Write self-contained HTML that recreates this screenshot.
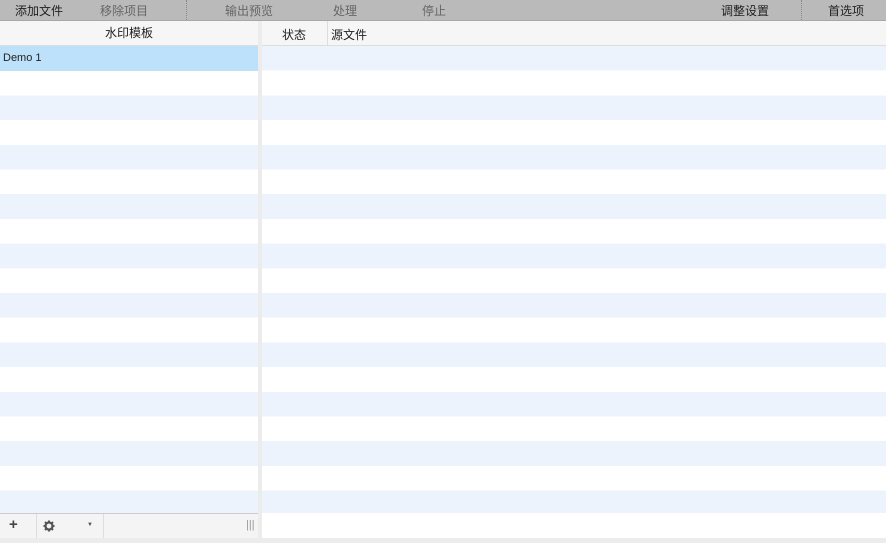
<!DOCTYPE html>
<html><head><meta charset="utf-8"><style>
*{margin:0;padding:0;box-sizing:border-box}
body{width:886px;height:543px;background:#ececec;position:relative;overflow:hidden;font-family:"Liberation Sans","Noto Sans CJK SC",sans-serif;font-size:12px;color:#222}
.tb{position:absolute;left:0;top:0;width:886px;height:21px;background:#bababa;border-bottom:1px solid #a8a8a8}
.tb span{position:absolute;top:2px;font-size:12px;color:#222}
.tb .d{color:#666}
.sep{position:absolute;top:0;width:0;height:20px;border-left:1px dotted #888}
.hd{position:absolute;top:21px;height:25px;background:#f6f6f6;border-bottom:1px solid #ddd;font-size:12px}
.rows{position:absolute;top:46px;background:repeating-linear-gradient(#edf3fd 0,#edf3fd 24.7px,#fff 24.7px,#fff 49.4px)}
</style></head><body>
<div class="tb">
<span style="left:15px">添加文件</span>
<span class="d" style="left:100px">移除项目</span>
<div class="sep" style="left:186px"></div>
<span class="d" style="left:225px">输出预览</span>
<span class="d" style="left:333px">处理</span>
<span class="d" style="left:422px">停止</span>
<span style="left:721px">调整设置</span>
<div class="sep" style="left:801px"></div>
<span style="left:828px">首选项</span>
</div>
<div style="position:absolute;left:0;top:21px;width:258px;height:517px;background:#fff"></div>
<div class="hd" style="left:0;width:258px;text-align:center;line-height:25px">水印模板</div>
<div class="rows" style="left:0;width:258px;height:467px"></div>
<div style="position:absolute;left:0;top:46px;width:258px;height:25px;background:#bde0fb;line-height:25px;padding-left:3px;font-size:11px">Demo 1</div>
<div style="position:absolute;left:0;top:513px;width:258px;height:25px;background:#f4f4f4;border-top:1px solid #ccc">
<span style="position:absolute;left:9px;top:2px;font-size:15px;font-weight:bold;color:#444">+</span>
<div style="position:absolute;left:36px;top:0;height:24px;border-left:1px solid #ddd"></div>
<svg style="position:absolute;left:43px;top:6px" width="12" height="12" viewBox="0 0 12 12"><circle cx="6" cy="6" r="3.5" fill="none" stroke="#555" stroke-width="2.2"/><g stroke="#555" stroke-width="2"><line x1="6" y1="0.5" x2="6" y2="2.5"/><line x1="6" y1="9.5" x2="6" y2="11.5"/><line x1="0.5" y1="6" x2="2.5" y2="6"/><line x1="9.5" y1="6" x2="11.5" y2="6"/><line x1="2" y1="2" x2="3.4" y2="3.4"/><line x1="8.6" y1="8.6" x2="10" y2="10"/><line x1="2" y1="10" x2="3.4" y2="8.6"/><line x1="8.6" y1="3.4" x2="10" y2="2"/></g></svg>
<span style="position:absolute;left:87px;top:8px;font-size:6px;color:#555">▼</span>
<div style="position:absolute;left:103px;top:0;height:24px;border-left:1px solid #ddd"></div>
<span style="position:absolute;left:246px;top:5px;font-size:11px;color:#999">|||</span>
</div>
<div style="position:absolute;left:262px;top:21px;width:624px;height:517px;background:#fff"></div>
<div class="hd" style="left:262px;width:624px">
<span style="position:absolute;left:20px;top:5px">状态</span>
<div style="position:absolute;left:65px;top:0;height:24px;border-left:1px solid #ddd"></div>
<span style="position:absolute;left:69px;top:5px">源文件</span>
</div>
<div class="rows" style="left:262px;width:624px;height:467px"></div>
</body></html>
